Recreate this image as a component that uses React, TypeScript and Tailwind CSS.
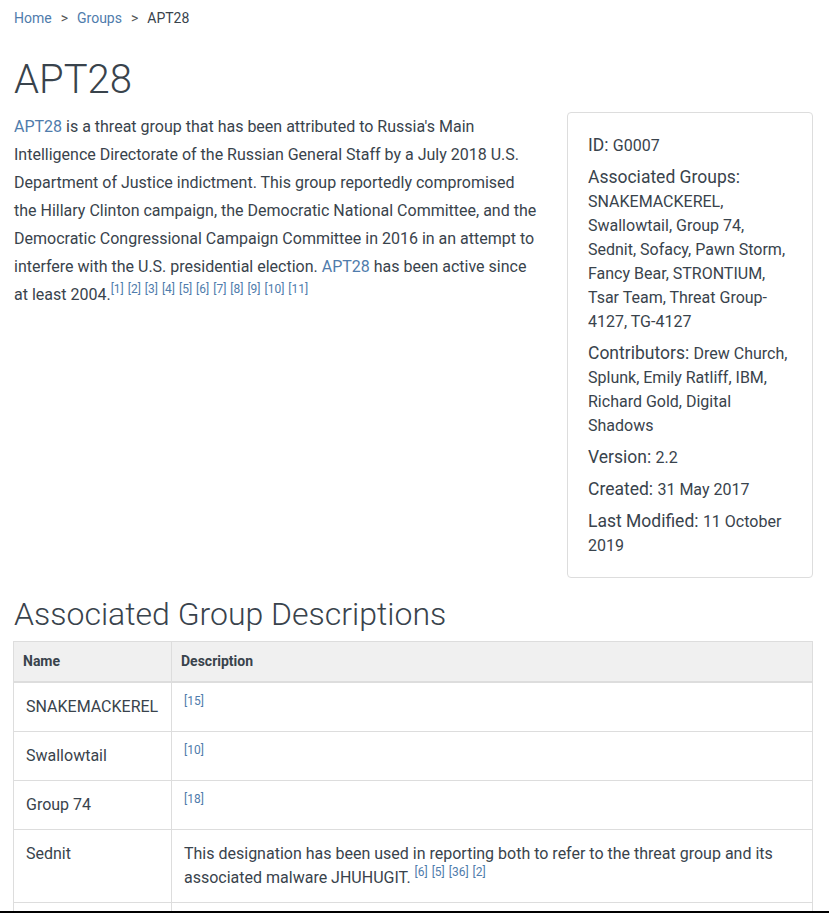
import React from 'react';

const LINK = 'text-[#4f7cac]';

const Refs = ({ nums }: { nums: number[] }) => (
  <>
    {nums.map((n, i) => (
      <React.Fragment key={n + '-' + i}>
        {i > 0 && ' '}
        <sup className={`${LINK} text-[12px] leading-[12px] relative -top-[0.55em] align-baseline`}>[{n}]</sup>
      </React.Fragment>
    ))}
  </>
);

const CardRow = ({ label, value }: { label: string; value: string }) => (
  <div className="text-[17.5px] leading-[24px]">
    <span>{label}: </span>
    <span className="text-[16px] leading-[18px]">{value}</span>
  </div>
);

export default function App() {
  const rows = [
    { name: 'SNAKEMACKEREL', desc: '', refs: [15] },
    { name: 'Swallowtail', desc: '', refs: [10] },
    { name: 'Group 74', desc: '', refs: [18] },
    {
      name: 'Sednit',
      desc: 'This designation has been used in reporting both to refer to the threat group and its associated malware JHUHUGIT. ',
      refs: [6, 5, 36, 2],
    },
    { name: 'Sofacy', desc: '', refs: [19] },
  ];

  return (
    <div className="min-h-[913px] bg-white text-[#39434c] font-['Roboto','Liberation_Sans',sans-serif] pl-[13px] pr-[16px]">
      <nav className="pt-[8px] text-[14px] leading-[20px] pl-[1px]">
        <span className={LINK}>Home</span>
        <span className="mx-[9px] text-[#555]">&gt;</span>
        <span className={LINK}>Groups</span>
        <span className="mx-[9px] text-[#555]">&gt;</span>
        <span>APT28</span>
      </nav>

      <h1 className="mt-[28px] mb-[8px] text-[40px] leading-[48px] font-light pl-[1px]">APT28</h1>

      <div className="flex justify-between">
        <p className="w-[527px] pl-[1px] text-[16px] leading-[28px] mt-[1px]">
          <span className={LINK}>APT28</span> is a threat group that has been attributed to Russia's Main Intelligence
          Directorate of the Russian General Staff by a July 2018 U.S. Department of Justice indictment. This group
          reportedly compromised the Hillary Clinton campaign, the Democratic National Committee, and the Democratic
          Congressional Campaign Committee in 2016 in an attempt to interfere with the U.S. presidential election.{' '}
          <span className={LINK}>APT28</span> has been active since at least 2004.
          <Refs nums={[1, 2, 3, 4, 5, 6, 7, 8, 9, 10, 11]} />
        </p>

        <div className="w-[246px] border border-[#ddd] rounded-[4px] p-5 flex flex-col gap-2">
          <CardRow label="ID" value="G0007" />
          <CardRow
            label="Associated Groups"
            value="SNAKEMACKEREL, Swallowtail, Group 74, Sednit, Sofacy, Pawn Storm, Fancy Bear, STRONTIUM, Tsar Team, Threat Group-4127, TG-4127"
          />
          <CardRow label="Contributors" value="Drew Church, Splunk, Emily Ratliff, IBM, Richard Gold, Digital Shadows" />
          <CardRow label="Version" value="2.2" />
          <CardRow label="Created" value="31 May 2017" />
          <CardRow label="Last Modified" value="11 October 2019" />
        </div>
      </div>

      <h2 className="mt-[16px] mb-[7px] text-[32px] leading-[40px] font-light pl-[1px]">Associated Group Descriptions</h2>

      <table className="w-full border-collapse border border-[#ddd] text-[16px] leading-[24px]">
        <thead>
          <tr className="bg-[#f0f0f0] border-b-2 border-[#ddd]">
            <th className="w-[158px] text-left font-bold text-[14px] leading-[15px] px-[9px] py-3 border border-[#ddd]">Name</th>
            <th className="text-left font-bold text-[14px] leading-[15px] px-[9px] py-3 border border-[#ddd]">Description</th>
          </tr>
        </thead>
        <tbody>
          {rows.map((r) => (
            <tr key={r.name} className="border-b border-[#ddd]">
              <td className="align-top px-3 py-3 border border-[#ddd]">{r.name}</td>
              <td className="align-top px-3 py-3 border border-[#ddd]">
                {r.desc}
                <Refs nums={r.refs} />
              </td>
            </tr>
          ))}
        </tbody>
      </table>

      <div className="fixed left-0 right-0 bottom-0 h-[2px] bg-black" />
    </div>
  );
}
